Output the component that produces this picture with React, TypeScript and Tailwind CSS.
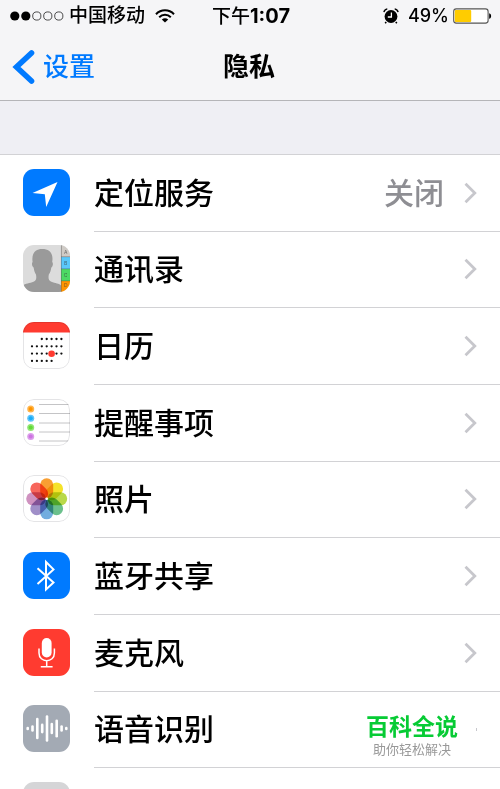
import type { ReactNode } from "react";

type Row = {
  label: string;
  icon: ReactNode;
  value?: string;
  promo?: boolean;
};

function LocationIcon() {
  return (
    <svg viewBox="0 0 47 47" className="size-full bg-[#007aff]">
      <path d="M34.5 13 L9.5 24 L21.8 25.2 L23.2 38 Z" fill="#fff" />
    </svg>
  );
}

function ContactsIcon() {
  return (
    <svg viewBox="0 0 47 47" className="size-full bg-[#dcdcdc]">
      <path
        d="M0 47V40.5C2 38.5 7 38.3 10.5 36.8C13.5 35.5 13.6 33 13 29.5C11.6 27.5 11 25 10.6 22.5C8.8 21.5 8.6 18 9.6 17C8.4 8.5 12 4 19.3 4C26.8 4 30.6 8.5 29.2 17C30.4 18 30 21.5 28.3 22.5C28 25 27.3 27.5 25.8 29.5C25.2 33 25.4 35.5 28.4 36.8C32 38.3 36.5 38.5 38 40.5V47Z"
        fill="#9a9a9a"
      />
      <rect x="38" width="9" height="12" fill="#cfcbc6" />
      <rect x="38" y="12" width="9" height="12" fill="#5ac8fa" />
      <rect x="38" y="24" width="9" height="12" fill="#4cd964" />
      <rect x="38" y="36" width="9" height="11" fill="#ff9500" />
      <path d="M38.4 0V47M38 11.7H47M38 23.8H47M38 35.8H47" stroke="#555" strokeOpacity=".55" strokeWidth=".8" />
      <g fontSize="5" fontFamily="Inter, sans-serif" fill="#333" fillOpacity=".65" textAnchor="middle">
        <text x="42.7" y="8.5">A</text>
        <text x="42.7" y="19.7">B</text>
        <text x="42.7" y="31.7">C</text>
        <text x="42.7" y="42">D</text>
      </g>
    </svg>
  );
}

const CALENDAR_DOTS = [
  [2, 3, 4, 5, 6],
  [0, 1, 2, 3, 4, 5, 6],
  [0, 1, 2, 3, 4, 5, 6],
  [0, 1, 2, 3, 4],
];

function CalendarIcon() {
  return (
    <svg viewBox="0 0 47 47" className="size-full bg-white">
      <rect width="47" height="10.5" fill="#ff3b30" />
      {CALENDAR_DOTS.map((cols, row) =>
        cols.map((col) => (
          <circle key={`${row}-${col}`} cx={9 + col * 4.9} cy={17 + row * 7.3} r="1.15" fill="#111" />
        ))
      )}
      <circle cx="28.6" cy="31.8" r="3.3" fill="#ff3b30" />
    </svg>
  );
}

function RemindersIcon() {
  return (
    <svg viewBox="0 0 47 47" className="size-full bg-white">
      <path d="M16 5.5H47M16 14.5H47M16 24H47M16 33H47M16 42H47" stroke="#c4c4c6" />
      {["#ff9500", "#1badf8", "#63da38", "#cc73e1"].map((color, i) => (
        <g key={color} fill={color}>
          <circle cx="7.7" cy={10 + i * 9.2} r="3.5" fillOpacity=".7" />
          <circle cx="7.7" cy={10 + i * 9.2} r="2" />
        </g>
      ))}
    </svg>
  );
}

const PETALS = ["#f99f32", "#f5e32a", "#b9d94a", "#6bc08c", "#72addf", "#a08fc8", "#cf92c0", "#f7665c"];

function PhotosIcon() {
  return (
    <svg viewBox="0 0 47 47" className="size-full bg-white">
      {PETALS.map((color, i) => (
        <rect
          key={color}
          x="17.2"
          y="3.3"
          width="13"
          height="19.8"
          rx="6.5"
          fill={color}
          transform={`rotate(${i * 45} 23.7 23.8)`}
          className="mix-blend-multiply"
        />
      ))}
      <circle cx="23.7" cy="23.8" r="1.3" fill="#fff" />
    </svg>
  );
}

function BluetoothIcon() {
  return (
    <svg viewBox="0 0 47 47" className="size-full bg-[#007aff]">
      <path
        d="M14.5 16.2L30.5 30.6L23 37.4V10L30.5 17.4L14.5 32"
        fill="none"
        stroke="#fff"
        strokeWidth="2"
      />
    </svg>
  );
}

function MicrophoneIcon() {
  return (
    <svg viewBox="0 0 47 47" className="size-full bg-[#ff3b30]">
      <rect x="18.8" y="9" width="9.8" height="19.5" rx="4.9" fill="#fff" />
      <path d="M16 19.5V24C16 34.3 31.4 34.3 31.4 24V19.5M23.7 31.8V37.7M17.8 37.7H29.6" fill="none" stroke="#fff" strokeWidth="1.5" />
    </svg>
  );
}

// [x, half height] of each bar
const WAVE = [
  [4.7, 0.4],
  [9.5, 2],
  [14.3, 9.5],
  [19.2, 3.6],
  [24, 12],
  [28.8, 4.4],
  [33.7, 7.8],
  [38.6, 2],
  [43.3, 0.4],
];

function SpeechIcon() {
  return (
    <svg viewBox="0 0 47 47" className="size-full bg-[#a3aab4]">
      {WAVE.map(([x, h]) => (
        <path key={x} d={`M${x} ${23.5 - h}V${23.5 + h}`} stroke="#fff" strokeWidth="2.6" strokeLinecap="round" />
      ))}
    </svg>
  );
}

const rows: Row[] = [
  { label: "定位服务", icon: <LocationIcon />, value: "关闭" },
  { label: "通讯录", icon: <ContactsIcon /> },
  { label: "日历", icon: <CalendarIcon /> },
  { label: "提醒事项", icon: <RemindersIcon /> },
  { label: "照片", icon: <PhotosIcon /> },
  { label: "蓝牙共享", icon: <BluetoothIcon /> },
  { label: "麦克风", icon: <MicrophoneIcon /> },
  { label: "语音识别", icon: <SpeechIcon />, promo: true },
  { label: "", icon: <div className="size-full bg-[#d5d5d7]" /> },
];

const OUTLINED = ["日历", "提醒事项", "照片"];

function Chevron() {
  return (
    <svg viewBox="0 0 13 22" className="h-[22px] w-[13px]" fill="none" stroke="#c7c7cc" strokeWidth="2.8">
      <path d="M1.5 1.8L10.8 11L1.5 20.2" />
    </svg>
  );
}

function SettingsRow({ label, icon, value, promo }: Row) {
  return (
    <li className="flex">
      <a href="#" className="flex flex-1 pl-[23px]">
        <span className="relative mb-[2px] size-[47px] shrink-0 self-center overflow-hidden rounded-[11px]">
          {icon}
          {OUTLINED.includes(label) && (
            <span className="absolute inset-0 rounded-[11px] border border-[#e4e4e6] mix-blend-multiply" />
          )}
        </span>
        <span className="ml-6 flex flex-1 items-center border-b border-[#d2d2d5] pr-[23px]">
          <span className="flex-1 text-[30px] leading-9 font-medium text-black">{label}</span>
          {value && <span className="mr-5 text-[30px] leading-9 font-medium text-[#8e8e93]">{value}</span>}
          {promo ? (
            <>
              <span className="mr-[18px] flex flex-col items-center pt-4">
                <strong className="text-[23px] leading-6 font-bold text-[#06cb34]">百科全说</strong>
                <small className="text-[13px] leading-5 text-[#999]">助你轻松解决</small>
              </span>
              <span className="h-[3px] w-px bg-[#c7c7cc]" />
            </>
          ) : (
            <Chevron />
          )}
        </span>
      </a>
    </li>
  );
}

function StatusBar() {
  return (
    <div className="grid h-8 grid-cols-[1fr_auto_1fr] items-center pr-2 pl-[10px] text-[19px] leading-6 font-medium">
      <div className="flex items-center">
        <svg viewBox="0 0 54 10" className="mr-[5px] h-[10px] w-[54px]">
          {[0, 1, 2, 3, 4].map((i) => (
            <circle
              key={i}
              cx={4.8 + i * 11}
              cy="5"
              r={i < 2 ? 4.6 : 4.1}
              fill={i < 2 ? "#000" : "none"}
              stroke={i < 2 ? "none" : "#222"}
              strokeWidth=".8"
            />
          ))}
        </svg>
        <span>中国移动</span>
        <svg viewBox="0 0 20 14" className="ml-[10px] h-[14px] w-5" fill="none" stroke="#000" strokeWidth="2">
          <path d="M1 5.2C6 0 14 0 19 5.2M4.2 8.2C7.5 5 12.5 5 15.8 8.2" />
          <path d="M6.8 10.4C8.6 8.8 11.4 8.8 13.2 10.4L10 13.6Z" fill="#000" stroke="none" />
        </svg>
      </div>
      <time>
        下午<span className="text-[20px] font-bold">1:07</span>
      </time>
      <div className="flex items-center justify-end">
        <svg viewBox="0 0 16 16" className="mr-[9px] size-4">
          <circle cx="8" cy="8.5" r="6.4" />
          <path d="M3.2 14L2.2 15.2M12.8 14L13.8 15.2" stroke="#000" strokeWidth="1.6" />
          <path d="M.9 4.2C1.3 2.5 2.6 1.2 4.3 .9M15.1 4.2C14.7 2.5 13.4 1.2 11.7 .9" fill="none" stroke="#000" strokeWidth="1.4" />
          <path d="M8.4 4.5V9H4.8" fill="none" stroke="#fff" strokeWidth="1.3" />
        </svg>
        <span className="text-[18px]">49%</span>
        <svg viewBox="0 0 39 16" className="ml-[4px] h-4 w-[39px]">
          <rect x=".7" y=".9" width="34.4" height="14.2" rx="2.6" fill="#fff" stroke="#555" strokeWidth="1.1" />
          <rect x="1.8" y="2" width="16.4" height="12" rx="1" fill="#fc0" />
          <path d="M36.2 5.2C38.8 6 38.8 10 36.2 10.8Z" />
        </svg>
      </div>
    </div>
  );
}

export default function App() {
  return (
    <div className="flex h-screen flex-col overflow-hidden bg-[#efeff4] font-['Inter','Noto_Sans_CJK_SC',sans-serif] text-black">
      <header className="shrink-0 border-b border-[#b5b5b8] bg-[#f5f5f7]">
        <StatusBar />
        <nav className="grid h-[68px] grid-cols-[1fr_auto_1fr] items-center pt-px pr-[14px] pl-3 text-[26px] leading-8">
          <button type="button" className="flex items-center justify-self-start font-medium text-[#007aff]">
            <svg viewBox="0 0 24 36" className="mr-[7px] h-9 w-6" fill="none" stroke="currentColor" strokeWidth="5.6">
              <path d="M19.5 4L4.5 18L19.5 32" strokeLinecap="round" />
            </svg>
            设置
          </button>
          <h1 className="font-bold">隐私</h1>
        </nav>
      </header>
      <main className="mt-[53px] shrink-0 border-t border-[#d2d2d5] bg-white">
        <ul className="grid min-h-[690px] auto-rows-fr">
          {rows.map((row, i) => (
            <SettingsRow key={i} {...row} />
          ))}
        </ul>
      </main>
    </div>
  );
}
